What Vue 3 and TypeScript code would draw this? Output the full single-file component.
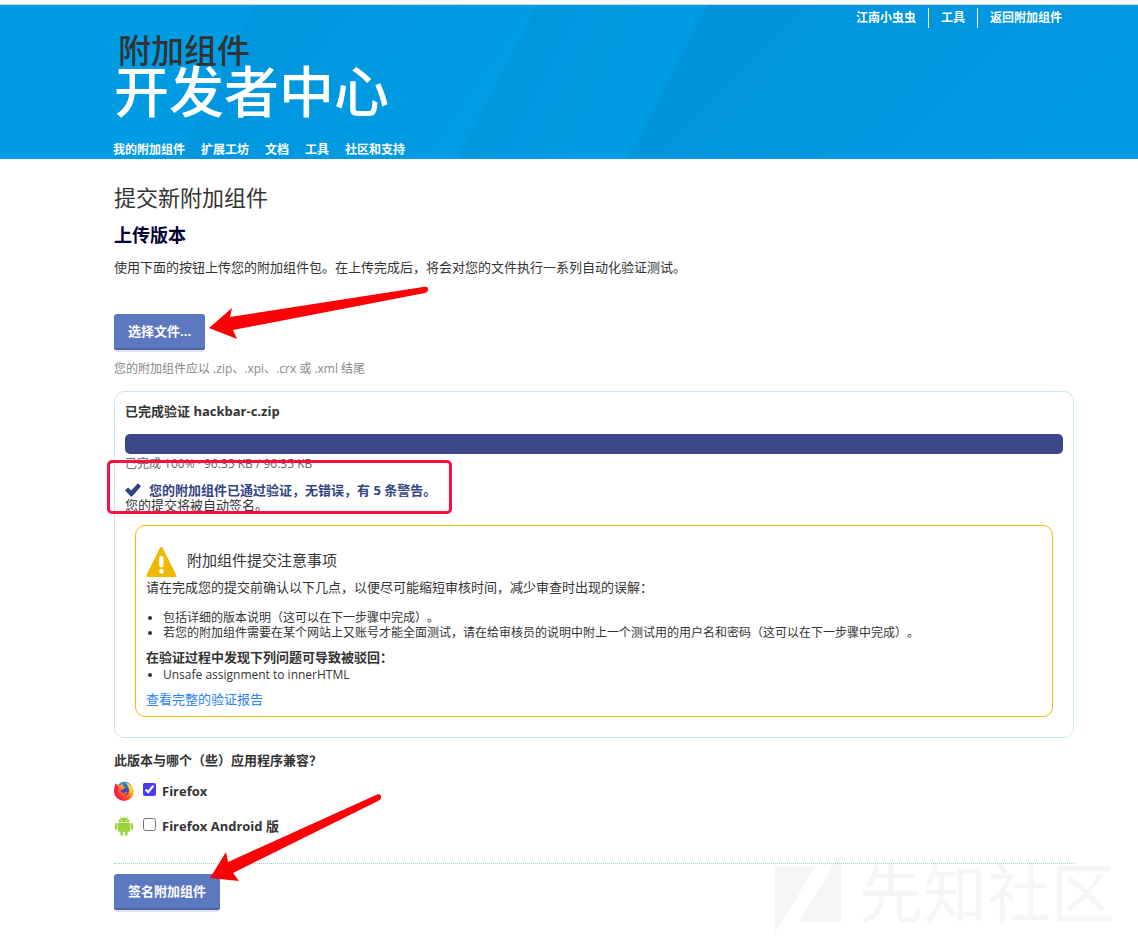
<script setup lang="ts">
import { ref } from 'vue'

interface AppTarget {
  id: string
  label: string
}

const accountLinks: string[] = ['江南小虫虫', '工具', '返回附加组件']
const navLinks: string[] = ['我的附加组件', '扩展工坊', '文档', '工具', '社区和支持']
const reviewNotes: string[] = [
  '包括详细的版本说明（这可以在下一步骤中完成）。',
  '若您的附加组件需要在某个网站上又账号才能全面测试，请在给审核员的说明中附上一个测试用的用户名和密码（这可以在下一步骤中完成）。',
]
const issues: string[] = ['Unsafe assignment to innerHTML']
const targets: AppTarget[] = [
  { id: 'firefox', label: 'Firefox' },
  { id: 'android', label: 'Firefox Android 版' },
]
const selected = ref<string[]>(['firefox'])
const progress = ref(100)
</script>

<template>
  <div class="page">
    <header class="masthead">
      <svg class="stripes" viewBox="0 0 1138 154" preserveAspectRatio="none" aria-hidden="true">
        <defs>
          <linearGradient id="s1" x2="1" y2=".3"><stop offset="0" stop-color="#0094dd" /><stop offset="1" stop-color="#009de4" /></linearGradient>
          <linearGradient id="s2" x2="1" y2=".3"><stop offset="0" stop-color="#0093dc" /><stop offset="0.8" stop-color="#009ce3" /><stop offset="1" stop-color="#009ce3" /></linearGradient>
          <linearGradient id="s3" x2="1" y2=".3"><stop offset="0" stop-color="#0092db" /><stop offset="1" stop-color="#009ae2" /></linearGradient>
        </defs>
        <path fill="url(#s1)" d="M255 0H538L457 154H180Z" />
        <path fill="url(#s2)" d="M538 0H708L627 154H457Z" />
        <path fill="url(#s3)" d="M708 0H1138V154H627Z" />
      </svg>
      <nav class="account" aria-label="账户">
        <a v-for="link in accountLinks" :key="link" href="#">{{ link }}</a>
      </nav>
      <h1 class="brand">
        <a class="brand-top" href="#">附加组件</a>
        <a class="brand-main" href="#">开发者中心</a>
      </h1>
      <nav class="site-nav" aria-label="主导航">
        <a v-for="link in navLinks" :key="link" href="#">{{ link }}</a>
      </nav>
    </header>

    <main class="content">
      <h2>提交新附加组件</h2>
      <h3>上传版本</h3>
      <p class="intro">使用下面的按钮上传您的附加组件包。在上传完成后，将会对您的文件执行一系列自动化验证测试。</p>

      <div class="action upload">
        <button type="button" class="btn">选择文件...</button>
        <svg class="arrow arrow-upload" width="220" height="54" viewBox="0 0 220 54" aria-hidden="true">
          <path fill="#fb0306" d="M0 42L23 22L21 31L214 1Q219 0 219 3Q219 6 216 7L24 44L28 53Z" />
        </svg>
      </div>
      <p class="hint">您的附加组件应以 .zip、.xpi、.crx 或 .xml 结尾</p>

      <section class="result">
        <strong class="filename">已完成验证 hackbar-c.zip</strong>
        <div class="track" role="progressbar" :aria-valuenow="progress">
          <div class="bar" :style="{ width: progress + '%' }"></div>
        </div>
        <div class="outcome">
          <p class="status">已完成 100% · 96.35 KB / 96.35 KB</p>
          <p class="passed">
            <svg width="16" height="14" viewBox="0 0 16 14" aria-hidden="true">
              <path fill="#344382" d="M0 7.2L3 4.4L6.2 7.4L13 .3L16 3.2L7.1 13.4H5.7Z" />
            </svg>
            <strong>您的附加组件已通过验证，无错误，有 5 条警告。</strong>
          </p>
          <p class="signing">您的提交将被自动签名。</p>
          <span class="highlight" aria-hidden="true"></span>
        </div>

        <section class="notice">
          <div class="notice-head">
            <svg width="31" height="30" viewBox="0 0 31 30" aria-hidden="true">
              <path fill="#efb900" d="M13.8 1Q15.3-1 16.8 1L30.2 28Q31 30 29 30H2Q0 30 .6 28Z" />
              <rect x="13.2" y="9" width="4.4" height="11.5" rx="2.2" fill="#fff" />
              <circle cx="15.4" cy="24.4" r="2.3" fill="#fff" />
            </svg>
            <h4>附加组件提交注意事项</h4>
          </div>
          <p class="lead">请在完成您的提交前确认以下几点，以便尽可能缩短审核时间，减少审查时出现的误解：</p>
          <ul class="notes">
            <li v-for="note in reviewNotes" :key="note">{{ note }}</li>
          </ul>
          <strong class="warn-title">在验证过程中发现下列问题可导致被驳回：</strong>
          <ul class="issues">
            <li v-for="issue in issues" :key="issue">{{ issue }}</li>
          </ul>
          <a class="report" href="#">查看完整的验证报告</a>
        </section>
      </section>

      <fieldset class="compat">
        <legend>此版本与哪个（些）应用程序兼容？</legend>
        <label v-for="target in targets" :key="target.id" class="target">
          <svg v-if="target.id === 'firefox'" width="20" height="20" viewBox="0 0 20 20" aria-hidden="true">
            <defs>
              <linearGradient id="fx-body" x1=".9" y1=".1" x2=".2" y2=".9">
                <stop offset="0" stop-color="#fff13a" /><stop offset=".35" stop-color="#ffb41f" /><stop offset=".6" stop-color="#ff5a2c" /><stop offset="1" stop-color="#f5124f" />
              </linearGradient>
              <linearGradient id="fx-globe" x1="0" y1="0" x2="0" y2="1">
                <stop offset="0" stop-color="#2f8be8" /><stop offset=".5" stop-color="#4150bd" /><stop offset="1" stop-color="#46218a" />
              </linearGradient>
            </defs>
            <circle cx="10.4" cy="8.6" r="7.8" fill="url(#fx-globe)" />
            <path fill="url(#fx-body)" d="M1.8 2.2Q2.4 4 3.4 4.3Q5 3.7 6.6 4.3Q7.4 2.7 9 2Q8.2 3.6 8.8 4.8Q9.4 5.8 11 6Q11 7.2 9.2 7.7Q8.4 8.4 8.5 9.2Q7.4 9.2 6.8 8.6Q6.5 10.8 8.6 11.7Q10.3 12.2 11.8 11Q13 10.7 13.4 11.5Q12.6 13.4 10.2 13.6Q12.8 14.8 14.4 12.6Q15.6 10.6 14.8 7.5Q14 4.6 11.6 1.6Q15.4 2.6 17 5.2Q17 4.2 16.7 3.5Q19.8 6 20 10.2A9.9 9.7 0 0 1 .1 10.2Q0 7.2 1.3 5.2Q1.2 3.5 1.8 2.2Z" />
            <path fill="#f5224b" d="M1.8 2.2Q.2 6 .1 10.2Q.6 15 4.4 18Q2.8 13.8 4 10Q4.6 7.6 3.4 4.3Z" />
          </svg>
          <svg v-else width="20" height="20" viewBox="0 0 20 20" aria-hidden="true">
            <g fill="#9bd33c">
              <path d="M4 6.3Q4.3 3.5 7 2.2L6 .6L6.4.3L7.5 1.9Q10 1.1 12.4 1.9L13.5.3L13.9.6L12.9 2.2Q15.6 3.5 16 6.3Z" />
              <path d="M4 7H16V14.6Q16 15.8 14.8 15.8H5.2Q4 15.8 4 14.6Z" />
              <rect x="1" y="7" width="2.4" height="7" rx="1.2" />
              <rect x="16.6" y="7" width="2.4" height="7" rx="1.2" />
              <rect x="6.4" y="14" width="2.6" height="5.8" rx="1.3" />
              <rect x="11" y="14" width="2.6" height="5.8" rx="1.3" />
            </g>
            <circle cx="7.5" cy="4.3" r=".6" fill="#fff" />
            <circle cx="12.4" cy="4.3" r=".6" fill="#fff" />
          </svg>
          <input v-model="selected" type="checkbox" :value="target.id" />
          <span>{{ target.label }}</span>
        </label>
      </fieldset>

      <div class="action submit">
        <button type="submit" class="btn">签名附加组件</button>
        <svg class="arrow arrow-submit" width="171" height="87" viewBox="0 0 171 87" aria-hidden="true">
          <path fill="#fb0306" d="M0 84L16 58L18 68L166 1Q170-1 171 2Q172 5 168 7L23 79L29 87Z" />
        </svg>
      </div>
    </main>

    <div class="watermark" aria-hidden="true">
      <svg width="66" height="80" viewBox="0 0 66 80">
        <path fill="#f6f6f6" d="M0 14H40L0 80ZM66 0V69H24Z" />
      </svg>
      <span>先知社区</span>
    </div>
  </div>
</template>

<style>
body {
  margin: 0;
  background: #fff;
}
</style>

<style scoped>
.page {
  position: relative;
  isolation: isolate;
  padding-top: 4px;
  padding-bottom: 31px;
  color: #333;
  font-family: "Open Sans", "Noto Sans CJK SC", sans-serif;
  font-size: 13px;
  line-height: 20px;
  text-spacing-trim: space-all;
}

h1, h2, h3, h4, p, ul {
  margin: 0;
  padding: 0;
}

a {
  text-decoration: none;
}

.masthead {
  position: relative;
  isolation: isolate;
  display: flex;
  flex-direction: column;
  border-top: 1px solid #cfd8df;
  background: #009ce3;
}

.stripes {
  position: absolute;
  inset: 0;
  z-index: -1;
  width: 100%;
  height: 100%;
}

.account {
  display: flex;
  justify-content: flex-end;
  padding: 3px 64px 0;
  font-size: 12px;
  font-weight: 700;
}

.account a {
  padding: 0 12px;
  color: #fff;
}

.account a + a {
  border-left: 1px solid #fff;
}

.brand {
  display: flex;
  flex-direction: column;
  align-items: flex-start;
  padding: 7px 114px 0;
  font-weight: 500;
}

.brand-top {
  padding-left: 4px;
  color: #333;
  font-size: 33px;
  line-height: 32px;
}

.brand-main {
  color: #fff;
  font-size: 55px;
  line-height: 48px;
}

.site-nav {
  display: flex;
  gap: 16px;
  padding: 25px 113px 0;
  font-size: 12px;
  font-weight: 700;
  line-height: 19px;
}

.site-nav a {
  color: #fff;
}

.content {
  padding: 23px 64px 0 114px;
}

h2 {
  font-size: 22px;
  font-weight: 400;
  line-height: 30px;
}

h3 {
  margin-top: 11px;
  color: #003;
  font-size: 18px;
  font-weight: 700;
  line-height: 24px;
}

.intro {
  margin-top: 10px;
}

.action {
  position: relative;
  display: flex;
}

.upload {
  margin-top: 37px;
}

.btn {
  height: 36px;
  padding: 0 14px 2px;
  border: 0;
  border-radius: 3px;
  background: #5c79c0;
  box-shadow: inset 0 -2px 0 #4a66ab, 0 2px 1px #e2e2e6;
  color: #fff;
  font: inherit;
  font-weight: 700;
}

.arrow {
  position: absolute;
}

.arrow-upload {
  left: 95px;
  top: -28px;
}

.arrow-submit {
  left: 96px;
  top: -80px;
}

.hint {
  margin-top: 9px;
  color: #888;
  font-size: 12px;
}

.result {
  margin-top: 12px;
  padding: 9px 10px 20px;
  border: 1px solid #c9e7f0;
  border-radius: 10px;
}

.filename {
  display: block;
}

.track {
  height: 20px;
  margin-top: 13px;
}

.bar {
  height: 100%;
  border-radius: 5px;
  background: #3b4888;
}

.outcome {
  position: relative;
}

.status {
  color: #666;
  font-size: 12px;
}

.passed {
  display: flex;
  align-items: center;
  gap: 8px;
  margin-top: 8px;
  color: #344382;
  line-height: 16px;
}

.signing {
  line-height: 14px;
}

.highlight {
  position: absolute;
  top: 6px;
  left: -18px;
  width: 339px;
  height: 48px;
  border: 3px solid #fd0e3f;
  border-radius: 5px;
}

.notice {
  margin: 13px 10px 0;
  padding: 21px 10px 7px;
  border: 1px solid #efc000;
  border-radius: 10px;
}

.notice-head {
  display: flex;
  align-items: flex-start;
  gap: 10px;
}

h4 {
  font-size: 15px;
  font-weight: 400;
  line-height: 26px;
}

.notes,
.issues {
  padding-left: 17px;
  font-size: 12px;
  line-height: 15px;
}

.notes {
  margin-top: 13px;
}

.warn-title {
  display: block;
  margin-top: 8px;
  line-height: 18px;
}

.issues {
  margin-top: 1px;
  line-height: 16px;
}

.report {
  display: block;
  width: max-content;
  margin-top: 6px;
  color: #2b82f6;
}

.compat {
  margin: 12px 0 0;
  padding: 0 0 26px;
  border: 0;
  border-bottom: 1px dotted #9fc9d3;
  font-weight: 700;
}

.compat legend {
  padding: 0 0 10px;
}

.target {
  display: flex;
  align-items: center;
  width: max-content;
  height: 22px;
}

.target + .target {
  margin-top: 13px;
}

.target input {
  width: 13px;
  height: 13px;
  margin: 0 6px 3px 9px;
  accent-color: #473cf5;
}

.submit {
  margin-top: 10px;
}

.watermark {
  position: absolute;
  right: 23px;
  bottom: 8px;
  z-index: -1;
  display: flex;
  align-items: center;
  gap: 18px;
  color: #f6f6f6;
  font-size: 64px;
  line-height: 80px;
}
</style>
